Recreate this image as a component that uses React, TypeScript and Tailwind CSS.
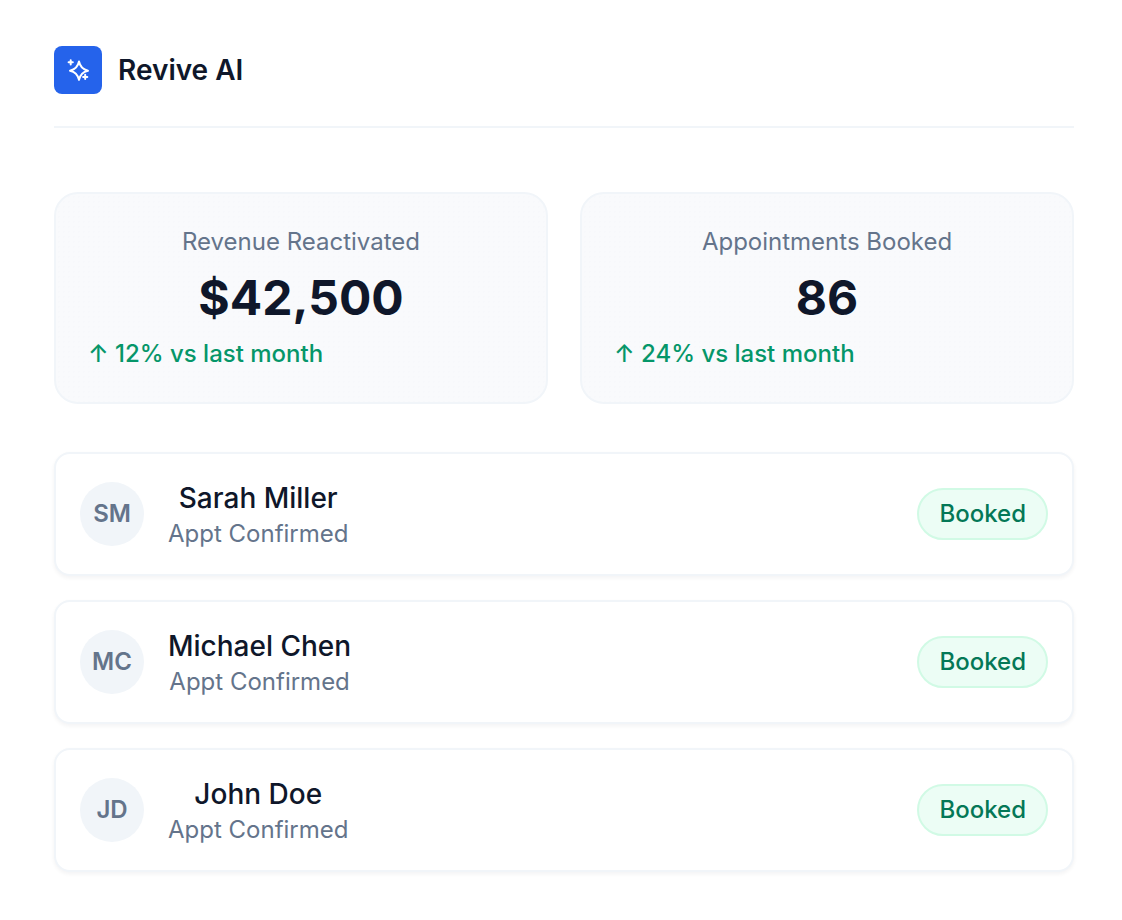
import React from "react";

const stats = [
  { label: "Revenue Reactivated", value: "$42,500", change: "12% vs last month" },
  { label: "Appointments Booked", value: "86", change: "24% vs last month" },
];

const people = [
  { initials: "SM", name: "Sarah Miller" },
  { initials: "MC", name: "Michael Chen" },
  { initials: "JD", name: "John Doe" },
];

function LogoIcon() {
  return (
    <svg width="24" height="24" viewBox="0 0 24 24" fill="none" stroke="white" strokeWidth="2" strokeLinecap="round" strokeLinejoin="round">
      <path d="M13 3.5Q14.6 11.1 22 12.7Q14.6 14.3 13 21.9Q11.4 14.3 4 12.7Q11.4 11.1 13 3.5Z" />
      <path d="M4.7 2.2V6.4M2.6 4.3H6.8" />
      <path d="M19.2 16.8V21M17.1 18.9H21.3" />
    </svg>
  );
}

export default function App() {
  return (
    <div className="min-h-[920px] bg-white pl-[54px] pr-[48px] pt-[46px] font-['Inter',sans-serif] text-[#0f172a]">
      <div className="flex items-center gap-4 border-b-2 border-[#f1f5f9] pb-8">
        <div className="flex h-12 w-12 items-center justify-center rounded-lg bg-[#2563eb]">
          <LogoIcon />
        </div>
        <div className="text-[28px] font-semibold leading-9">Revive AI</div>
      </div>

      <div className="mt-16 grid grid-cols-2 gap-8">
        {stats.map((s) => (
          <div
            key={s.label}
            className="h-[212px] rounded-3xl border-2 border-[#f1f5f9] bg-[#f9fafc] bg-[radial-gradient(#f7f8fb_1px,transparent_1px)] bg-[size:5px_5px] px-8 pt-8"
          >
            <div className="text-center text-2xl leading-8 text-[#64748b]">{s.label}</div>
            <div className="mt-4 text-center text-5xl font-bold leading-[48px]">{s.value}</div>
            <div className="mt-4 text-2xl font-medium leading-8 text-[#059669]">
              ↑ {s.change}
            </div>
          </div>
        ))}
      </div>

      <div className="mt-12 flex flex-col gap-6">
        {people.map((p) => (
          <div
            key={p.name}
            className="flex h-[124px] items-center justify-between rounded-2xl border-2 border-[#f1f5f9] bg-white px-6 shadow-[0_2px_4px_rgba(15,23,42,0.05)]"
          >
            <div className="flex items-center gap-6">
              <div className="flex h-16 w-16 items-center justify-center rounded-full bg-[#f1f5f9] text-2xl font-semibold text-[#64748b]">
                {p.initials}
              </div>
              <div className="pt-0.5 text-center">
                <div className="text-[28px] font-medium leading-9">{p.name}</div>
                <div className="pt-0.5 text-2xl leading-8 text-[#64748b]">Appt Confirmed</div>
              </div>
            </div>
            <div className="rounded-full border-2 border-[#d1fae5] bg-[#ecfdf5] px-5 py-2 text-2xl font-medium leading-8 text-[#047857]">
              Booked
            </div>
          </div>
        ))}
      </div>
    </div>
  );
}
